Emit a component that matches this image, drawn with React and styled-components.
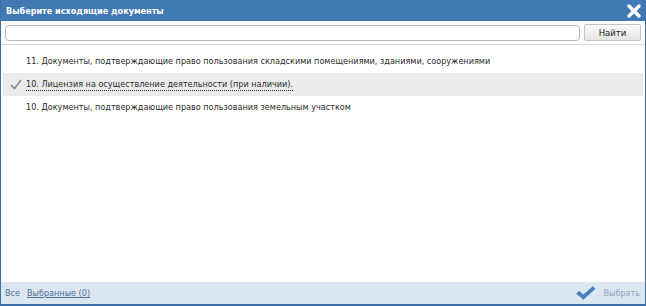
import React from "react";
import styled, { createGlobalStyle } from "styled-components";

const GlobalStyle = createGlobalStyle`
  html, body { margin: 0; padding: 0; background: #fff; overflow: hidden; }
  * { box-sizing: border-box; }
`;

const FONT = `"DejaVu Sans Condensed", "Liberation Sans", sans-serif`;

const Window = styled.div`
  width: 646px;
  height: 306px;
  display: flex;
  flex-direction: column;
  border: 1px solid #3b6fa6;
  border-bottom-width: 2px;
  border-top: none;
  background: #fff;
  font-family: ${FONT};
`;

const TitleBar = styled.div`
  height: 21px;
  flex: none;
  display: flex;
  align-items: center;
  justify-content: space-between;
  padding: 0 3px 0 5px;
  background: #4179b4;
  color: #fff;
  font-weight: bold;
  font-size: 9px;
`;

const CloseButton = styled.button`
  width: 16px;
  height: 16px;
  padding: 0;
  border: none;
  background: transparent;
  display: flex;
  align-items: center;
  justify-content: center;
`;

const SearchRow = styled.div`
  height: 24px;
  flex: none;
  display: flex;
  align-items: center;
  gap: 4px;
  padding: 0 4px;
  border-bottom: 1px solid #d9d9d9;
`;

const SearchInput = styled.input`
  flex: 1;
  height: 16px;
  border: 1px solid #b9b9b9;
  border-radius: 4px;
  background: #fff;
  outline: none;
`;

const FindButton = styled.button`
  width: 57px;
  height: 17px;
  border: 1px solid #c4c4c4;
  border-radius: 2px;
  background: linear-gradient(#fafafa, #e4e4e4);
  font-family: ${FONT};
  font-size: 9.5px;
  color: #222;
  padding: 0;
`;

const List = styled.div`
  flex: 1;
  padding: 5px 2px 0 2px;
  display: flex;
  flex-direction: column;
`;

const Row = styled.div`
  height: 23px;
  display: flex;
  align-items: center;
  background: ${(p) => (p.$selected ? "#ebebeb" : "transparent")};
  font-size: 9px;
  color: #2b2b2b;
`;

const CheckSlot = styled.span`
  width: 23px;
  flex: none;
  display: flex;
  align-items: center;
  justify-content: center;
  padding-left: 2px;
`;

const RowText = styled.span`
  border-bottom: ${(p) => (p.$focused ? "1px dotted #333" : "1px solid transparent")};
  line-height: 12px;
`;

const Footer = styled.div`
  height: 22px;
  flex: none;
  display: flex;
  align-items: center;
  justify-content: space-between;
  padding: 0 5px 0 4px;
  background: #dce6f1;
  font-size: 9px;
`;

const FooterLinks = styled.div`
  display: flex;
  gap: 7px;
`;

const Link = styled.span`
  color: #4f6f99;
  text-decoration: ${(p) => (p.$underline ? "underline" : "none")};
`;

const ChooseButton = styled.div`
  display: flex;
  align-items: center;
  gap: 7px;
  color: #8ea3bd;
`;

const items = [
  { text: "11. Документы, подтверждающие право пользования складскими помещениями, зданиями, сооружениями" },
  { text: "10. Лицензия на осуществление деятельности (при наличии).", selected: true },
  { text: "10. Документы, подтверждающие право пользования земельным участком" },
];

export default function App() {
  return (
    <>
      <GlobalStyle />
      <Window>
        <TitleBar>
          <span>Выберите исходящие документы</span>
          <CloseButton aria-label="Закрыть">
            <svg width="14" height="14" viewBox="0 0 14 14">
              <path d="M2 2 L12 12 M12 2 L2 12" stroke="#fff" strokeWidth="3.4" strokeLinecap="round" />
            </svg>
          </CloseButton>
        </TitleBar>
        <SearchRow>
          <SearchInput />
          <FindButton>Найти</FindButton>
        </SearchRow>
        <List>
          {items.map((it, i) => (
            <Row key={i} $selected={it.selected}>
              <CheckSlot>
                {it.selected && (
                  <svg width="12" height="11" viewBox="0 0 12 11">
                    <path d="M1 6 L4.5 9.5 L11 1" stroke="#8a8a8a" strokeWidth="1.6" fill="none" />
                  </svg>
                )}
              </CheckSlot>
              <RowText $focused={it.selected}>{it.text}</RowText>
            </Row>
          ))}
        </List>
        <Footer>
          <FooterLinks>
            <Link>Все</Link>
            <Link $underline>Выбранные (0)</Link>
          </FooterLinks>
          <ChooseButton>
            <svg width="21" height="16" viewBox="0 0 20 15">
              <path d="M1 8 L4 5.5 L8 9 L17 1 L19.5 3.5 L8 14 Z" fill="#4a80bd" />
            </svg>
            <span>Выбрать</span>
          </ChooseButton>
        </Footer>
      </Window>
    </>
  );
}
